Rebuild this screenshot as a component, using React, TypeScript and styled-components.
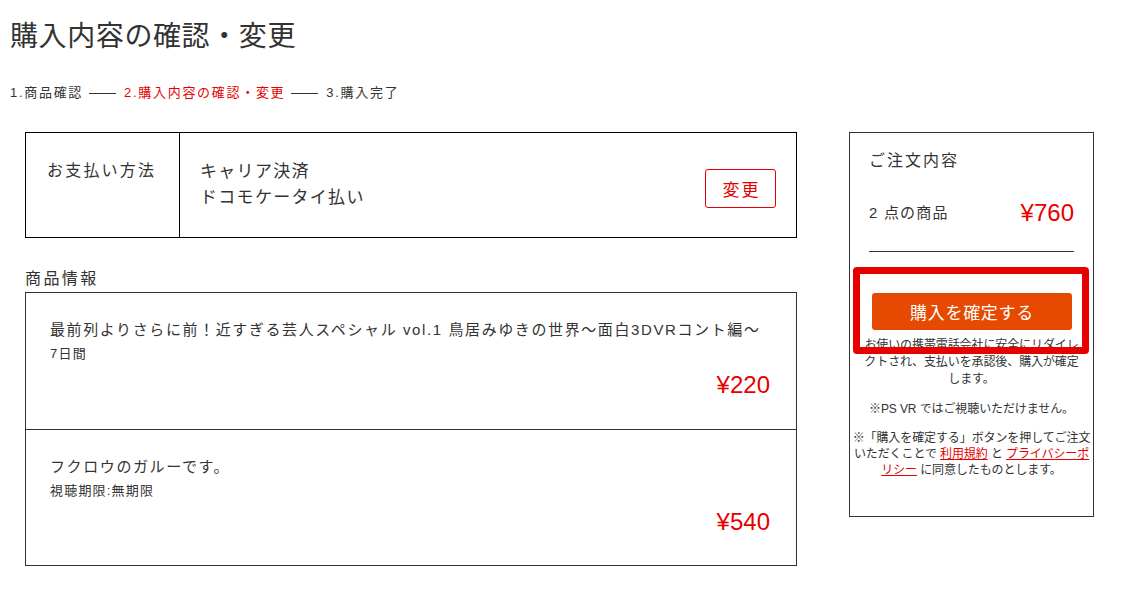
import React from 'react';
import styled, { createGlobalStyle } from 'styled-components';

const colors = {
  text: '#333',
  red: '#e60000',
  orange: '#e64a00',
  border: '#333',
};

const GlobalStyle = createGlobalStyle`
  body {
    margin: 0;
    background: #fff;
    color: ${colors.text};
    font-family: "Liberation Sans", Arial, "Noto Sans CJK JP", sans-serif;
  }
`;

type Product = { title: string; term: string; price: string };

const products: Product[] = [
  {
    title: '最前列よりさらに前！近すぎる芸人スペシャル vol.1 鳥居みゆきの世界〜面白3DVRコント編〜',
    term: '7日間',
    price: '¥220',
  },
  { title: 'フクロウのガルーです。', term: '視聴期限:無期限', price: '¥540' },
];

const App = () => (
  <Page>
    <GlobalStyle />
    <Title>購入内容の確認・変更</Title>
    <Steps>
      <Step>1.商品確認</Step>
      <StepLine />
      <Step active>2.購入内容の確認・変更</Step>
      <StepLine />
      <Step>3.購入完了</Step>
    </Steps>
    <Main>
      <LeftColumn>
        <PaymentTable>
          <PaymentLabel>お支払い方法</PaymentLabel>
          <PaymentBody>
            <PaymentText>
              キャリア決済
              <br />
              ドコモケータイ払い
            </PaymentText>
            <ChangeButton>変更</ChangeButton>
          </PaymentBody>
        </PaymentTable>
        <SectionTitle>商品情報</SectionTitle>
        <ProductList>
          {products.map((p) => (
            <ProductRow key={p.title}>
              <ProductTitle>{p.title}</ProductTitle>
              <ProductTerm>{p.term}</ProductTerm>
              <Price>{p.price}</Price>
            </ProductRow>
          ))}
        </ProductList>
      </LeftColumn>
      <Sidebar>
        <SidebarTitle>ご注文内容</SidebarTitle>
        <SummaryRow>
          <SummaryLabel>2 点の商品</SummaryLabel>
          <TotalPrice>¥760</TotalPrice>
        </SummaryRow>
        <Divider />
        <ConfirmArea>
          <ConfirmButton>購入を確定する</ConfirmButton>
          <Highlight />
        </ConfirmArea>
        <Note first>お使いの携帯電話会社に安全にリダイレクトされ、支払いを承認後、購入が確定します。</Note>
        <Note>※PS VR ではご視聴いただけません。</Note>
        <Note>
          ※「購入を確定する」ボタンを押してご注文いただくことで <NoteLink href="#">利用規約</NoteLink> と{' '}
          <NoteLink href="#">プライバシーポリシー</NoteLink> に同意したものとします。
        </Note>
      </Sidebar>
    </Main>
  </Page>
);

export default App;

const Page = styled.div`
  padding: 16px 0 0 10px;
  width: 1128px;
  box-sizing: border-box;
`;

const Title = styled.h1`
  margin: 0;
  font-size: 28px;
  line-height: 42px;
  font-weight: normal;
  letter-spacing: 0.6px;
`;

const Steps = styled.div`
  display: flex;
  align-items: center;
  margin-top: 25px;
  font-size: 13px;
  line-height: 20px;
  letter-spacing: 1.7px;
`;

const Step = styled.span<{ active?: boolean }>`
  color: ${(p) => (p.active ? colors.red : colors.text)};
`;

const StepLine = styled.span`
  display: inline-block;
  width: 27px;
  margin: 0 8px 0 6px;
  border-top: 1px solid ${colors.text};
`;

const Main = styled.div`
  display: flex;
  align-items: flex-start;
  gap: 52px;
  margin-top: 29px;
  padding-left: 15px;
`;

const LeftColumn = styled.div`
  width: 772px;
`;

const PaymentTable = styled.div`
  display: flex;
  border: 1px solid #000;
  height: 106px;
  box-sizing: border-box;
`;

const PaymentLabel = styled.div`
  width: 154px;
  flex-shrink: 0;
  border-right: 1px solid #000;
  padding: 26px 0 0 21px;
  box-sizing: border-box;
  font-size: 16px;
  line-height: 24px;
  letter-spacing: 2.2px;
`;

const PaymentBody = styled.div`
  flex: 1;
  display: flex;
  align-items: center;
  justify-content: space-between;
  padding: 0 20px 0 20px;
`;

const PaymentText = styled.div`
  font-size: 17px;
  line-height: 26px;
  letter-spacing: 1.3px;
`;

const ChangeButton = styled.button`
  width: 71px;
  height: 39px;
  margin-top: 6px;
  padding: 0 0 0 2px;
  border: 1px solid ${colors.red};
  border-radius: 3px;
  background: #fff;
  color: ${colors.red};
  font-size: 17px;
  letter-spacing: 2px;
  font-family: "Liberation Sans", "Noto Sans CJK JP", sans-serif;
  cursor: pointer;
`;

const SectionTitle = styled.h2`
  margin: 29px 0 1px;
  font-size: 16px;
  line-height: 24px;
  font-weight: normal;
  letter-spacing: 2.4px;
`;

const ProductList = styled.div`
  border: 1px solid ${colors.border};
`;

const ProductRow = styled.div`
  display: flex;
  flex-direction: column;
  height: 136px;
  box-sizing: border-box;
  padding: 26px 26px 0 24px;
  & + & {
    border-top: 1px solid ${colors.border};
  }
`;

const ProductTitle = styled.div`
  font-size: 15px;
  line-height: 22px;
  letter-spacing: 1.6px;
`;

const ProductTerm = styled.div`
  margin-top: 3px;
  font-size: 13px;
  line-height: 20px;
  letter-spacing: 1.2px;
`;

const Price = styled.div`
  margin-top: 5px;
  align-self: flex-end;
  color: ${colors.red};
  font-size: 24px;
  line-height: 32px;
`;

const Sidebar = styled.div`
  width: 245px;
  height: 385px;
  box-sizing: border-box;
  border: 1px solid ${colors.border};
  padding: 16px 1px 0;
`;

const SidebarTitle = styled.div`
  padding: 0 18px;
  font-size: 16px;
  line-height: 24px;
  letter-spacing: 2px;
`;

const SummaryRow = styled.div`
  display: flex;
  align-items: center;
  justify-content: space-between;
  margin-top: 24px;
  padding: 0 18px;
  line-height: 32px;
`;

const SummaryLabel = styled.span`
  font-size: 15px;
  letter-spacing: 1.2px;
`;

const TotalPrice = styled.span`
  color: ${colors.red};
  font-size: 24px;
`;

const Divider = styled.hr`
  margin: 22px 18px 0;
  border: none;
  border-top: 1px solid ${colors.border};
`;

const ConfirmArea = styled.div`
  position: relative;
  margin: 41px 20px 0 21px;
`;

const ConfirmButton = styled.button`
  display: block;
  width: 200px;
  height: 37px;
  border: none;
  border-radius: 3px;
  background: ${colors.orange};
  color: #fff;
  font-size: 17px;
  letter-spacing: 0.7px;
  font-family: "Liberation Sans", "Noto Sans CJK JP", sans-serif;
  cursor: pointer;
`;

const Highlight = styled.div`
  position: absolute;
  left: -19px;
  top: -26px;
  width: 236px;
  height: 87px;
  box-sizing: border-box;
  border: 7px solid ${colors.red};
  border-radius: 4px;
  pointer-events: none;
`;

const Note = styled.p<{ first?: boolean }>`
  margin: ${(p) => (p.first ? '7px 10px 0' : '13px 0 0')};
  font-size: 12px;
  line-height: ${(p) => (p.first ? '17px' : '16px')};
  text-align: center;
  letter-spacing: -0.1px;
`;

const NoteLink = styled.a`
  color: ${colors.red};
  text-decoration: underline;
`;
